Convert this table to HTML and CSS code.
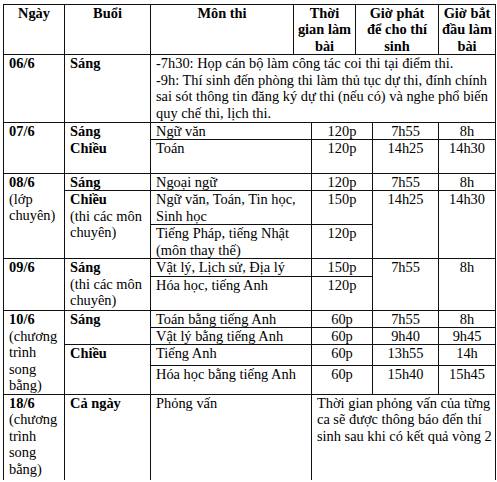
FILE: index.html
```html
<!DOCTYPE html>
<html lang="vi">
<head>
<meta charset="utf-8">
<title>Lịch thi</title>
<link rel="stylesheet" href="styles.css">
</head>
<body>
<div class="page">
<table class="sched">
<colgroup>
<col class="c1"><col class="c2"><col class="c3"><col class="c4"><col class="c5"><col class="c6"><col class="c7"><col class="c8">
</colgroup>
<tr class="h-head">
<th>Ngày</th>
<th>Buổi</th>
<th>Môn thi</th>
<th colspan="2">Thời<br>gian làm<br>bài</th>
<th colspan="2">Giờ phát<br>để cho thí<br>sinh</th>
<th>Giờ bắt<br>đầu làm<br>bài</th>
</tr>
<tr class="h68">
<td><b>06/6</b></td>
<td><b>Sáng</b></td>
<td colspan="6">-7h30: Họp cán bộ làm công tác coi thi tại điểm thi.<br>-9h: Thí sinh đến phòng thi làm thủ tục dự thi, đính chính<br>sai sót thông tin đăng ký dự thi (nếu có) và nghe phổ biến<br>quy chế thi, lịch thi.</td>
</tr>
<tr class="h17">
<td rowspan="2"><b>07/6</b></td>
<td rowspan="2"><b>Sáng<br>Chiều</b></td>
<td colspan="2">Ngữ văn</td>
<td colspan="2" class="n">120p</td>
<td class="n">7h55</td>
<td class="n">8h</td>
</tr>
<tr class="h34">
<td colspan="2">Toán</td>
<td colspan="2" class="n">120p</td>
<td class="n">14h25</td>
<td class="n">14h30</td>
</tr>
<tr class="h17">
<td rowspan="3"><b>08/6</b><br>(lớp<br>chuyên)</td>
<td><b>Sáng</b></td>
<td colspan="2">Ngoại ngữ</td>
<td colspan="2" class="n">120p</td>
<td class="n">7h55</td>
<td class="n">8h</td>
</tr>
<tr class="h34">
<td rowspan="2"><b>Chiều</b><br>(thi các môn<br>chuyên)</td>
<td colspan="2">Ngữ văn, Toán, Tin học,<br>Sinh học</td>
<td colspan="2" class="n">150p</td>
<td rowspan="2" class="n">14h25</td>
<td rowspan="2" class="n">14h30</td>
</tr>
<tr class="h34">
<td colspan="2">Tiếng Pháp, tiếng Nhật<br>(môn thay thế)</td>
<td colspan="2" class="n">120p</td>
</tr>
<tr class="h18">
<td rowspan="2"><b>09/6</b></td>
<td rowspan="2"><b>Sáng</b><br>(thi các môn<br>chuyên)</td>
<td colspan="2">Vật lý, Lịch sử, Địa lý</td>
<td colspan="2" class="n">150p</td>
<td rowspan="2" class="n">7h55</td>
<td rowspan="2" class="n">8h</td>
</tr>
<tr class="h34">
<td colspan="2">Hóa học, tiếng Anh</td>
<td colspan="2" class="n">120p</td>
</tr>
<tr class="h17">
<td rowspan="4"><b>10/6</b><br>(chương<br>trình<br>song<br>bằng)</td>
<td rowspan="2"><b>Sáng</b></td>
<td colspan="2">Toán bằng tiếng Anh</td>
<td colspan="2" class="n">60p</td>
<td class="n">7h55</td>
<td class="n">8h</td>
</tr>
<tr class="h17">
<td colspan="2">Vật lý bằng tiếng Anh</td>
<td colspan="2" class="n">60p</td>
<td class="n">9h40</td>
<td class="n">9h45</td>
</tr>
<tr class="h18">
<td rowspan="2"><b>Chiều</b></td>
<td colspan="2">Tiếng Anh</td>
<td colspan="2" class="n">60p</td>
<td class="n">13h55</td>
<td class="n">14h</td>
</tr>
<tr class="h29">
<td colspan="2">Hóa học bằng tiếng Anh</td>
<td colspan="2" class="n">60p</td>
<td class="n">15h40</td>
<td class="n">15h45</td>
</tr>
<tr class="h87 last">
<td><b>18/6</b><br>(chương<br>trình<br>song<br>bằng)</td>
<td><b>Cả ngày</b></td>
<td colspan="2">Phỏng vấn</td>
<td colspan="4" class="note">Thời gian phỏng vấn của từng<br>ca sẽ được thông báo đến thí<br>sinh sau khi có kết quả vòng 2</td>
</tr>
</table>
<div class="strip"></div>
</div>
</body>
</html>
```
FILE: styles.css
```css
html, body {
  margin: 0;
  padding: 0;
  background: #ffffff;
}
.page {
  width: 497px;
  height: 482px;
  overflow: hidden;
  padding-top: 4px;
  box-sizing: border-box;
}
.sched {
  margin-left: 3px;
  border-collapse: collapse;
  table-layout: fixed;
  width: 493px;
  font-family: "Liberation Serif", "Times New Roman", serif;
  font-size: 14.4px;
  line-height: 16.5px;
  color: #000;
}
.c1 { width: 61px; }
.c2 { width: 86px; }
.c3 { width: 143px; }
.c4 { width: 18px; }
.c5 { width: 44px; }
.c6 { width: 17px; }
.c7 { width: 66px; }
.c8 { width: 57px; }
.sched th,
.sched td {
  border: 1px solid #111111;
  padding: 0 3px 0 5px;
  vertical-align: top;
  text-align: left;
  white-space: nowrap;
  overflow: hidden;
}
.sched th {
  font-weight: bold;
  text-align: center;
  padding: 0 1px;
  line-height: 16.3px;
}
.sched td.n {
  text-align: center;
  padding: 0 1px;
}
.sched tr.h17 td:not([rowspan]) {
  line-height: 16px;
}
.sched td.note {
  padding-top: 0;
}
.sched tr.last td {
  border-bottom: none;
}
.h-head { height: 50px; }
.h68 { height: 68px; }
.h17 { height: 17px; }
.h18 { height: 18px; }
.h29 { height: 29px; }
.h34 { height: 34px; }
.h87 { height: 86px; }
.strip {
  margin-top: 2px;
  height: 3px;
  background: #c9c9c9;
}
```
